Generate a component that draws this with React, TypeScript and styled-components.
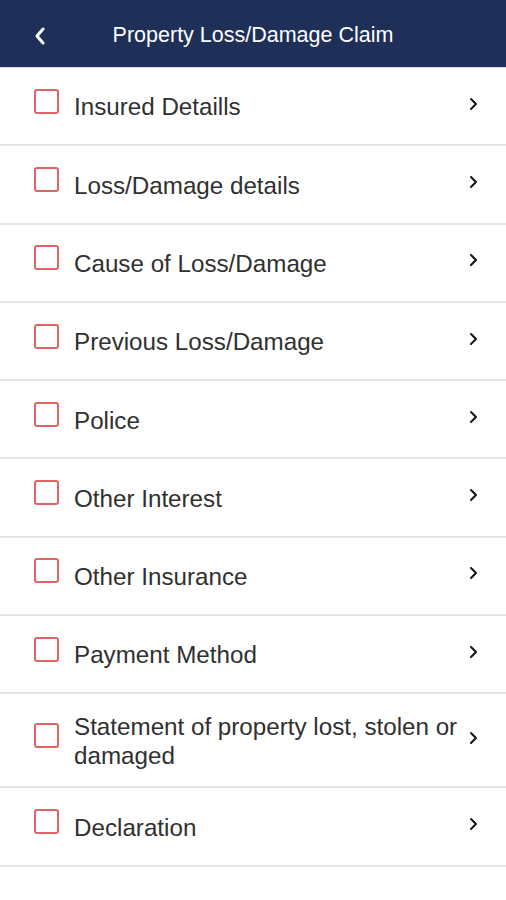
import styled, { createGlobalStyle } from "styled-components";

const GlobalStyle = createGlobalStyle`
  html, body {
    margin: 0;
    padding: 0;
    background: #ffffff;
    font-family: "Liberation Sans", Arial, sans-serif;
  }
  * { box-sizing: border-box; }
`;

const Page = styled.div`
  width: 506px;
  min-height: 900px;
  background: #ffffff;
`;

const Header = styled.header`
  height: 68px;
  background: #1e3058;
  border-bottom: 1px solid #d6dbe4;
  display: grid;
  grid-template-columns: 68px 1fr 68px;
  align-items: center;
`;

const BackButton = styled.button`
  background: none;
  border: none;
  padding: 5px 0 0 34px;
  height: 100%;
  display: flex;
  align-items: center;
  cursor: pointer;
`;

const Title = styled.h1`
  margin: 4px 0 0;
  text-align: center;
  color: #ffffff;
  font-size: 21.5px;
  font-weight: 400;
  white-space: nowrap;
`;

const List = styled.ul`
  list-style: none;
  margin: 0;
  padding: 0;
`;

const Row = styled.li`
  display: flex;
  align-items: center;
  min-height: 78.3px;
  padding: 16px 28px 16px 34px;
  border-bottom: 2px solid #e6e6e6;
`;

const Box = styled.span`
  flex: none;
  width: 25px;
  height: 25px;
  border: 2px solid #e06464;
  border-radius: 3px;
  margin-bottom: 10px;
  margin-right: 15px;
`;

const Label = styled.span`
  flex: 1;
  color: #303030;
  font-size: 24.2px;
  line-height: 28.5px;
  padding: 3px 4px 0 0;
`;

const Chevron = styled.svg`
  flex: none;
  margin-bottom: 5px;
`;

const items = [
  "Insured Detaills",
  "Loss/Damage details",
  "Cause of Loss/Damage",
  "Previous Loss/Damage",
  "Police",
  "Other Interest",
  "Other Insurance",
  "Payment Method",
  "Statement of property lost, stolen or damaged",
  "Declaration",
];

export default function App() {
  return (
    <Page>
      <GlobalStyle />
      <Header>
        <BackButton aria-label="Back">
          <svg width="12" height="18" viewBox="0 0 12 18">
            <path d="M9 2 L3 9 L9 16" fill="none" stroke="#ffffff" strokeWidth="3" strokeLinecap="round" strokeLinejoin="round" />
          </svg>
        </BackButton>
        <Title>Property Loss/Damage Claim</Title>
        <span />
      </Header>
      <List>
        {items.map((label) => (
          <Row key={label}>
            <Box />
            <Label>{label}</Label>
            <Chevron width="9" height="14" viewBox="0 0 9 14">
              <path d="M2 2 L7 7 L2 12" fill="none" stroke="#111111" strokeWidth="2" strokeLinecap="round" strokeLinejoin="round" />
            </Chevron>
          </Row>
        ))}
      </List>
    </Page>
  );
}
